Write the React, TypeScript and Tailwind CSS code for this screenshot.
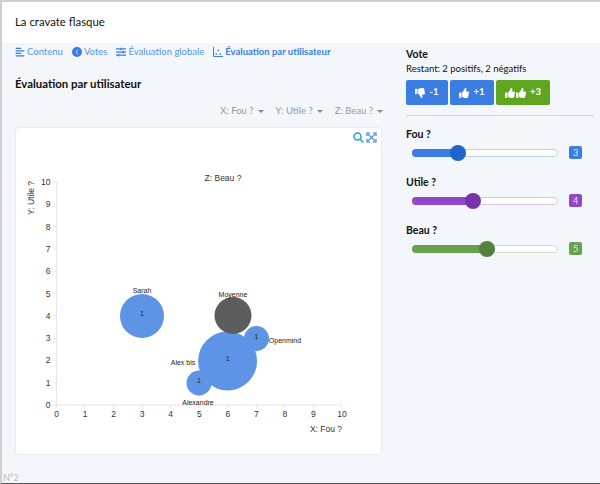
import { FaAlignLeft, FaSlidersH, FaThumbsUp, FaThumbsDown } from 'react-icons/fa'

const bubbles = [
  { cx: 142, cy: 316, r: 22, name: 'Sarah', lx: 142, ly: 293 },
  { cx: 227.6, cy: 361, r: 29.5, name: 'Alex bis', lx: 183, ly: 365 },
  { cx: 199, cy: 383, r: 12.5, name: 'Alexandre', lx: 198, ly: 405 },
  { cx: 256.5, cy: 338.5, r: 12.5, name: 'Openmind', lx: 285, ly: 343 },
]

function Chart() {
  const ox = 56.5
  const oy = 405
  const sx = 28.55
  const sy = 22.3
  const ticks = [0, 1, 2, 3, 4, 5, 6, 7, 8, 9, 10]
  return (
    <svg width="600" height="484" viewBox="0 0 600 484" className="absolute left-[-16px] top-[-128px] pointer-events-none">
      <g stroke="#e6e6e6" strokeWidth="1">
        <line x1={ox} y1={oy - 10 * sy} x2={ox} y2={oy} />
        <line x1={ox} y1={oy} x2={ox + 10 * sx} y2={oy} />
        {ticks.map(t => <line key={`x${t}`} x1={ox + t * sx} y1={oy} x2={ox + t * sx} y2={oy + 3} />)}
        {ticks.map(t => <line key={`y${t}`} x1={ox - 3} y1={oy - t * sy} x2={ox} y2={oy - t * sy} />)}
      </g>
      <g fontFamily="'Liberation Sans', Arial, sans-serif" fontSize="8.5" fill="#333">
        {ticks.map(t => <text key={`xl${t}`} x={ox + t * sx} y={oy + 12} textAnchor="middle">{t}</text>)}
        {ticks.map(t => <text key={`yl${t}`} x={ox - 6} y={oy - t * sy + 3} textAnchor="end">{t}</text>)}
        <text x="326" y="432" textAnchor="middle">X: Fou ?</text>
        <text x="223" y="181" textAnchor="middle">Z: Beau ?</text>
        <text transform="translate(34 198) rotate(-90)" textAnchor="middle">Y: Utile ?</text>
      </g>
      <g opacity="0.82">
        {bubbles.map(b => <circle key={b.name} cx={b.cx} cy={b.cy} r={b.r} fill="#3b7de0" />)}
        <circle cx="233" cy="315.5" r="18.5" fill="#3a3a3a" />
      </g>
      <g fontFamily="'Liberation Sans', Arial, sans-serif" fontSize="7" fill="#222" textAnchor="middle">
        {bubbles.map(b => (
          <g key={b.name}>
            <text x={b.lx} y={b.ly}>{b.name}</text>
            <text x={b.cx} y={b.cy}>1</text>
          </g>
        ))}
        <text x="233" y="297">Moyenne</text>
      </g>
    </svg>
  )
}

function Slider({ label, value, pct, bar, knob, track, badge }: { label: string; value: number; pct: string; bar: string; knob: string; track: string; badge: string }) {
  return (
    <div className="h-12">
      <p className="text-[10.5px] leading-4 font-bold text-[#111]">{label}</p>
      <div className="flex items-center mt-[4px] pl-[6px]">
        <div className={`relative w-[146px] h-2 rounded-full border bg-white ${track}`}>
          <div className={`absolute left-[-1px] top-[-1px] h-2 rounded-full ${bar} ${pct}`}>
            <div className={`absolute right-[-8px] top-[-4px] w-4 h-4 rounded-full ${knob}`} />
          </div>
        </div>
        <span className={`ml-[11px] w-[13px] h-[13px] rounded-[2px] text-white/80 text-[9px] leading-[13px] text-center ${badge}`}>{value}</span>
      </div>
    </div>
  )
}

function Caret() {
  return <span className="w-0 h-0 border-x-[3px] border-x-transparent border-t-[3px] border-t-[#888]" />
}

export default function App() {
  return (
    <div className="w-[600px] h-[484px] overflow-hidden bg-[#f3f6fa] border-t-2 border-l-2 border-b border-[#cfcfcf] border-b-[#555] font-['Lato','Open_Sans',sans-serif] text-[#111]">
      <header className="h-[41px] bg-white pl-[13px] pt-[12px] text-[11.4px] leading-4">La cravate flasque</header>
      <div className="flex pl-[13px]">
        <div className="w-[367px]">
          <nav className="flex items-center gap-[9px] h-4 mt-px text-[9.5px] text-[#5b93e6]">
            <span className="flex items-center gap-[2px]"><FaAlignLeft size={10} className="text-[#3b7de0]" />Contenu</span>
            <span className="flex items-center gap-[2px]">
              <svg width="10" height="10" viewBox="0 0 10 10"><circle cx="5" cy="5" r="5" fill="#3b7de0" /><path d="M6 2.5 4.2 5 6 7.5" fill="none" stroke="#dbe7fa" strokeWidth="0.8" /></svg>
              Votes
            </span>
            <span className="flex items-center gap-[2px]"><FaSlidersH size={10} className="text-[#3b7de0]" />Évaluation globale</span>
            <span className="flex items-center gap-[2px] font-bold text-[#3b7de0]">
              <svg width="10" height="10" viewBox="0 0 10 10" fill="none" stroke="currentColor"><path d="M.5 0v9.5H10" /><path d="M2.5 7h1.5M4.5 3.5H6M6.5 7H8" strokeWidth="1.4" /></svg>
              Évaluation par utilisateur
            </span>
          </nav>
          <h1 className="mt-[16px] text-[11.4px] leading-4 font-bold">Évaluation par utilisateur</h1>
          <div className="flex justify-end items-center gap-[12px] mt-[11px] -mr-px h-4 text-[9.5px] text-[#999]">
            <span className="flex items-center gap-[4px]">X: Fou ?<Caret /></span>
            <span className="flex items-center gap-[4px]">Y: Utile ?<Caret /></span>
            <span className="flex items-center gap-[4px]">Z: Beau ?<Caret /></span>
          </div>
          <div className="relative mt-[8px] h-[328px] bg-white rounded border border-[#e8ecf1] overflow-hidden">
            <Chart />
            <div className="absolute right-[4px] top-[4px] flex items-center gap-[2px]">
              <svg width="11" height="11" viewBox="0 0 11 11" fill="none" stroke="#2a9fd6" strokeWidth="1.5"><circle cx="4.5" cy="4.5" r="3.5" /><path d="m7 7 3.5 3.5" /></svg>
              <svg width="11" height="11" viewBox="0 0 11 11" fill="none" stroke="#3b7de0" strokeWidth="1.2"><path d="M1 4V1h3M7 1h3v3M10 7v3H7M4 10H1V7" /><path d="m2 2 7 7M9 2l-7 7" stroke="#5b93e6" /></svg>
            </div>
          </div>
          <p className="mt-[17px] -ml-[12px] text-[9px] leading-3 text-[#bbb]">N°2</p>
        </div>
        <aside className="ml-[24px] w-[188px] pt-[3px]">
          <p className="text-[10.5px] leading-4 font-bold">Vote</p>
          <p className="text-[9.5px] leading-4 mt-[-1px]">Restant: 2 positifs, 2 négatifs</p>
          <div className="flex gap-[2px] mt-[3px] text-white text-[9.5px] font-bold">
            <button className="flex items-center justify-center gap-1 w-[42px] h-[25px] rounded-[2px] bg-[#3b7de0]"><FaThumbsDown size={10} />-1</button>
            <button className="flex items-center justify-center gap-1 w-[44px] h-[25px] rounded-[2px] bg-[#3b7de0]"><FaThumbsUp size={10} />+1</button>
            <button className="flex items-center justify-center gap-1 w-[54px] h-[25px] rounded-[2px] bg-[#5fa51f]"><span className="flex gap-px"><FaThumbsUp size={10} /><FaThumbsUp size={10} /></span>+3</button>
          </div>
          <div className="h-px bg-[#d5d8dc] mt-[10px] mb-[10px]" />
          <Slider label="Fou ?" value={3} pct="w-[46px]" bar="bg-[#3b7de0]" knob="bg-[#1f66c8]" track="border-[#bcd2f2]" badge="bg-[#3b7de0]" />
          <Slider label="Utile ?" value={4} pct="w-[61px]" bar="bg-[#9247c9]" knob="bg-[#7634a8]" track="border-[#d9c2ea]" badge="bg-[#9247c9]" />
          <Slider label="Beau ?" value={5} pct="w-[75px]" bar="bg-[#67a04f]" knob="bg-[#53813f]" track="border-[#cfe0c6]" badge="bg-[#67a04f]" />
        </aside>
      </div>
    </div>
  )
}
